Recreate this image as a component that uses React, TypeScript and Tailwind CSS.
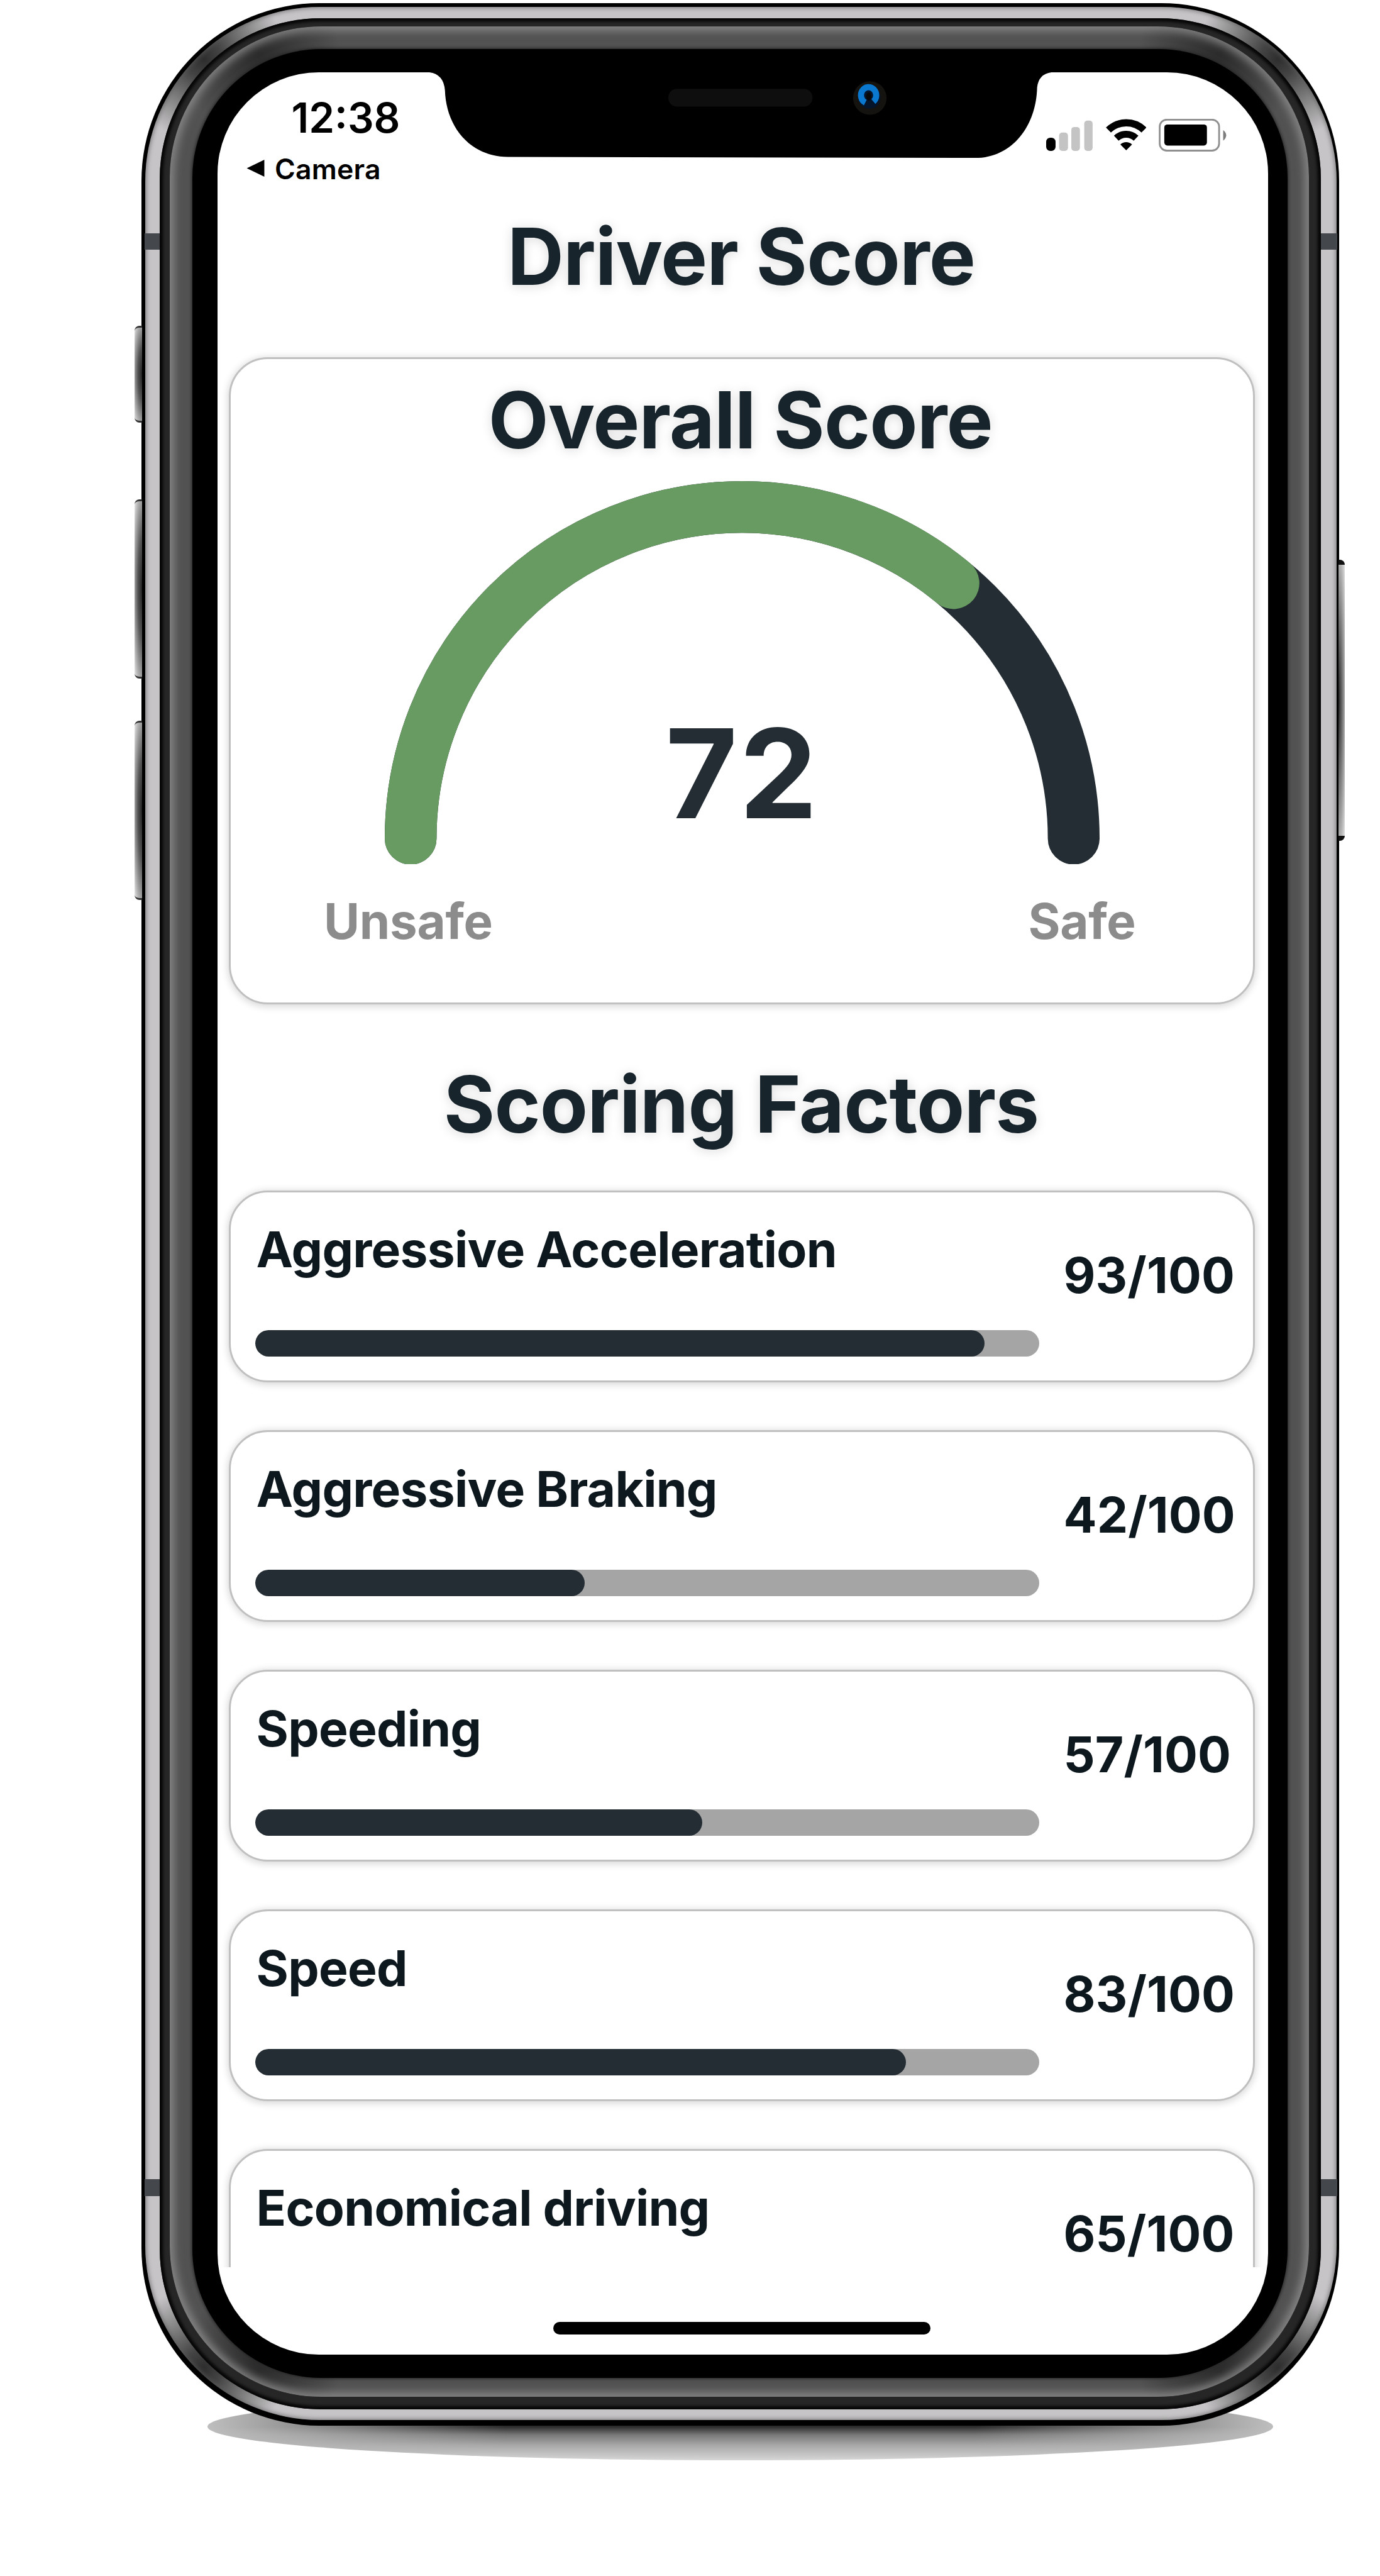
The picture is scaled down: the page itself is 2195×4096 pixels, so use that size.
const factors = [
  { label: "Aggressive Acceleration", score: 93 },
  { label: "Aggressive Braking", score: 42 },
  { label: "Speeding", score: 57 },
  { label: "Speed", score: 83 },
  { label: "Economical driving", score: 65 },
];

function SignalIcon() {
  return (
    <svg className="h-[51.7px] w-[74.3px]" viewBox="0 0 92 64" fill="#c4c4c4">
      <rect x="0" y="37" width="18.5" height="26" rx="8" fill="#000" />
      <rect x="25.5" y="27" width="17.5" height="36" rx="6" />
      <rect x="49.5" y="16" width="17" height="47" rx="6" />
      <rect x="75" y="3.5" width="16.5" height="59.5" rx="6" />
    </svg>
  );
}

function WifiIcon() {
  return (
    <svg className="h-[51.7px] w-[64.6px]" viewBox="0 0 80 64" fill="none" stroke="#000">
      <path d="M5 22 A50 50 0 0 1 75 22" strokeWidth="14" />
      <path d="M20.5 38 A28.5 28.5 0 0 1 59.5 38" strokeWidth="13.5" />
      <path d="M40 62 L28.5 50.5 A16.5 16.5 0 0 1 51.5 50.5 Z" fill="#000" stroke="none" />
    </svg>
  );
}

function BatteryIcon() {
  return (
    <svg className="h-[51.7px] w-[107.4px]" viewBox="0 0 133 64">
      <rect x="2" y="1.5" width="117" height="61" rx="14" fill="none" stroke="#8f8f8f" strokeWidth="3.5" />
      <rect x="11" y="11" width="84" height="41.5" rx="6" fill="#000" />
      <path d="M127 22 Q133 27 133 32.500 Q133 38 127 43 Z" fill="#7d7d7d" />
    </svg>
  );
}

function StatusBar() {
  return (
    <header className="flex h-[217px] shrink-0 justify-between pr-[66px] text-black">
      <div className="flex flex-col pt-[39px]">
        <time className="ml-[118px] text-[65.500px] leading-[68px] font-semibold">12:38</time>
        <div className="mt-[23.500px] ml-[46.500px] flex h-[48px] items-center">
          <svg className="mt-[-4px] h-[27px] w-[29px]" viewBox="0 0 28.5 26.6">
            <path d="M0.500 13.300 L28 0 V26.600 Z" fill="#000" />
          </svg>
          <span className="ml-[16px] text-[44.500px] leading-[48px] font-semibold tracking-[0.2px]">Camera</span>
        </div>
      </div>
      <div className="flex items-start gap-[20px] pt-[74.500px]">
        <SignalIcon />
        <WifiIcon />
        <BatteryIcon />
      </div>
    </header>
  );
}

function Notch() {
  return (
    <svg className="absolute top-[-5.600px] left-[331px] h-[150.200px] w-[1005.400px]" viewBox="838 135 1245 186">
      <path
        d="M838 133 V142 Q873 142 876 178 C878 246 922 308 1000 309 L1920 311 C1995 311 2041 246 2042.500 172 Q2046 142 2078 142 V133 Z"
        fill="#000"
      />
      <rect x="1316" y="175" width="284" height="35" rx="17" fill="#0e0e0e" />
      <circle cx="1713" cy="193" r="33" fill="#151310" />
      <circle cx="1712" cy="192" r="22" fill="#04142b" />
      <path d="M1704 202 A15 16 0 1 1 1720 200" fill="none" stroke="#0b78d0" strokeWidth="12" />
      <ellipse cx="1711" cy="190" rx="5" ry="8" fill="#080808" />
    </svg>
  );
}

function Title({ children }: { children: string }) {
  return (
    <h2 className="text-center text-[124.500px] leading-[152px] font-bold tracking-[-0.9px] text-[#18242b] [text-shadow:0_0_3px_#fff,0_2px_18px_rgba(0,0,0,0.15)]">
      {children}
    </h2>
  );
}

function Gauge({ value }: { value: number }) {
  return (
    <div className="mt-[21px] ml-[2px] grid h-[609.700px] justify-center">
      <svg className="col-start-1 row-start-1 h-[609.700px] w-[1137px]" viewBox="758 948 1408 755" fill="none" strokeWidth="102" strokeLinecap="round">
        <path d="M809 1652 A653 653 0 0 1 2115 1652" stroke="#232d33" />
        <path d="M809 1652 A653 653 0 0 1 2115 1652" stroke="#689b62" pathLength="100" strokeDasharray={`${value} 200`} />
      </svg>
      <div className="col-start-1 row-start-1 mt-[365px] text-center text-[197px] leading-[200px] font-bold tracking-[3px] text-[#232d33]">
        {value}
      </div>
    </div>
  );
}

const card =
  "rounded-[62px] border-[3px] border-[#c0c0c0] bg-white shadow-[0_2px_12px_2px_rgba(0,0,0,0.15)]";

function OverallCard() {
  return (
    <section className={`${card} mt-[84.500px] mr-[21px] ml-[18.500px] h-[1029px] shrink-0 pt-[20.500px]`}>
      <div className="-ml-[4px]">
        <Title>Overall Score</Title>
      </div>
      <Gauge value={72} />
      <div className="mt-[42.500px] flex justify-between pr-[186px] pl-[148px] text-[78px] leading-[96px] font-bold tracking-[-0.3px] text-[#8c8c8c]">
        <span>Unsafe</span>
        <span>Safe</span>
      </div>
    </section>
  );
}

function FactorCard({ label, score }: { label: string; score: number }) {
  return (
    <section className={`${card} flex h-[305px] shrink-0 pl-[39px] text-[#0d181e]`}>
      <div className="w-[1247px] pt-[42.600px]">
        <div className="pl-[1.500px] text-[78.500px] leading-[96px] font-bold tracking-[-0.75px] whitespace-nowrap">{label}</div>
        <div className="mt-[80.500px] h-[41.500px] overflow-hidden rounded-full bg-[#a5a5a5]">
          <div className="h-full rounded-full bg-[#232d33]" style={{ width: `${score}%` }} />
        </div>
      </div>
      <div className="pt-[84px] pl-[38.500px] text-[78.500px] leading-[96px] font-bold tracking-[0.1px] whitespace-nowrap">
        {score}/100
      </div>
    </section>
  );
}

function Screen() {
  return (
    <div className="relative flex h-[3629px] flex-col overflow-hidden rounded-[161px] bg-white">
      <Notch />
      <StatusBar />
      <main className="flex h-[3273.300px] shrink-0 flex-col overflow-hidden">
        <div className="-ml-[4px]">
          <Title>Driver Score</Title>
        </div>
        <OverallCard />
        <div className="mt-[83px] -ml-[4px]">
          <Title>Scoring Factors</Title>
        </div>
        <div className="mt-[61.200px] mr-[21px] ml-[18.500px] flex flex-col gap-[75.900px]">
          {factors.map((f) => (
            <FactorCard key={f.label} {...f} />
          ))}
        </div>
      </main>
      <div className="mt-[87.500px] ml-[534.700px] h-[20px] w-[600px] shrink-0 rounded-full bg-black" />
    </div>
  );
}

function FrameDetails() {
  return (
    <>
      <div className="absolute top-[513px] left-[-11px] h-[154px] w-[12px] rounded-l-[8px] border-y-[3px] border-[#333] bg-[radial-gradient(ellipse_at_100%_50%,#222_0,#555_40%,#e4e4e4_100%)]" />
      <div className="absolute top-[789px] left-[-11px] h-[285px] w-[12px] rounded-l-[8px] border-y-[3px] border-[#333] bg-[radial-gradient(ellipse_at_100%_50%,#222_0,#555_40%,#e8e8e8_100%)]" />
      <div className="absolute top-[1141px] left-[-11px] h-[285px] w-[12px] rounded-l-[8px] border-y-[3px] border-[#333] bg-[radial-gradient(ellipse_at_100%_50%,#222_0,#555_40%,#e8e8e8_100%)]" />
      <div className="absolute top-[885px] right-[-9px] h-[447px] w-[10px] rounded-r-[8px] border-y-[8px] border-[#111] bg-[radial-gradient(ellipse_at_0%_50%,#222_0,#777_45%,#e2e2e2_100%)]" />
      <div className="absolute top-[366px] left-[5px] h-[26px] w-[24px] bg-[#44474c]" />
      <div className="absolute top-[366px] right-[3px] h-[26px] w-[26px] bg-[#44474c]" />
      <div className="absolute top-[3460px] left-[5px] h-[27px] w-[24px] bg-[#44474c]" />
      <div className="absolute top-[3460px] right-[3px] h-[27px] w-[26px] bg-[#44474c]" />
    </>
  );
}

export default function App() {
  return (
    <div className="relative isolate h-[4096px] w-[2195px] overflow-hidden bg-white pt-[5px] pl-[224.500px] font-['Inter','Liberation_Sans',sans-serif]">
      {/* Contact shadow under the device */}
      <div className="absolute top-[3805px] left-[329.500px] -z-10 h-[107px] w-[1695px] rounded-[50%] bg-[linear-gradient(to_right,rgba(190,190,190,1),rgba(185,185,185,0.600)_12%,transparent_28%,transparent_72%,rgba(185,185,185,0.600)_88%,rgba(190,190,190,1)),linear-gradient(to_bottom,#222_0%,#2a2a2a_50%,#777_62%,#a8a8a8_78%,#d6d6d6_100%)]" />

      {/* Device body: outline, steel band, dark groove, bevel, bezel */}
      <div className="relative w-[1905px] rounded-[283px] bg-black pt-[6px] pr-[4px] pb-[9px] pl-[6px]">
        <div className="rounded-[278px] bg-[radial-gradient(circle_at_94px_84px,#2e2e2e_0,#454545_30px,transparent_130px),radial-gradient(circle_at_calc(100%-94px)_84px,#2e2e2e_0,#454545_30px,transparent_130px),radial-gradient(circle_at_94px_calc(100%-84px),#2e2e2e_0,#454545_30px,transparent_130px),radial-gradient(circle_at_calc(100%-94px)_calc(100%-84px),#2e2e2e_0,#454545_30px,transparent_130px),linear-gradient(#c6c4c6,#c6c4c6)] pt-[18px] pr-[25px] pb-[17px] pl-[23px] shadow-[inset_0_0_6px_2px_rgba(90,88,90,0.6)]">
          <div className="rounded-[256px] bg-[#262626] pt-[13px] pr-[19px] pb-[20px] pl-[16px] shadow-[inset_0_0_4px_5px_#060606]">
            <div className="rounded-[240px] bg-[radial-gradient(circle_at_140px_40px,rgba(38,38,38,0.9)_0,transparent_130px),radial-gradient(circle_at_calc(100%-140px)_40px,rgba(38,38,38,0.9)_0,transparent_130px),radial-gradient(circle_at_140px_calc(100%-40px),rgba(38,38,38,0.9)_0,transparent_130px),radial-gradient(circle_at_calc(100%-140px)_calc(100%-40px),rgba(38,38,38,0.9)_0,transparent_130px),linear-gradient(#525252,#525252)] pt-[35.500px] pr-[34px] pb-[30px] pl-[36px] shadow-[inset_0_0_14px_7px_rgba(150,150,150,0.75)]">
              <div className="rounded-[205px] bg-black pt-[37.200px] pr-[31px] pb-[37px] pl-[40px] shadow-[0_0_5px_1px_#222]">
                <Screen />
              </div>
            </div>
          </div>
        </div>
        <FrameDetails />
      </div>
    </div>
  );
}
